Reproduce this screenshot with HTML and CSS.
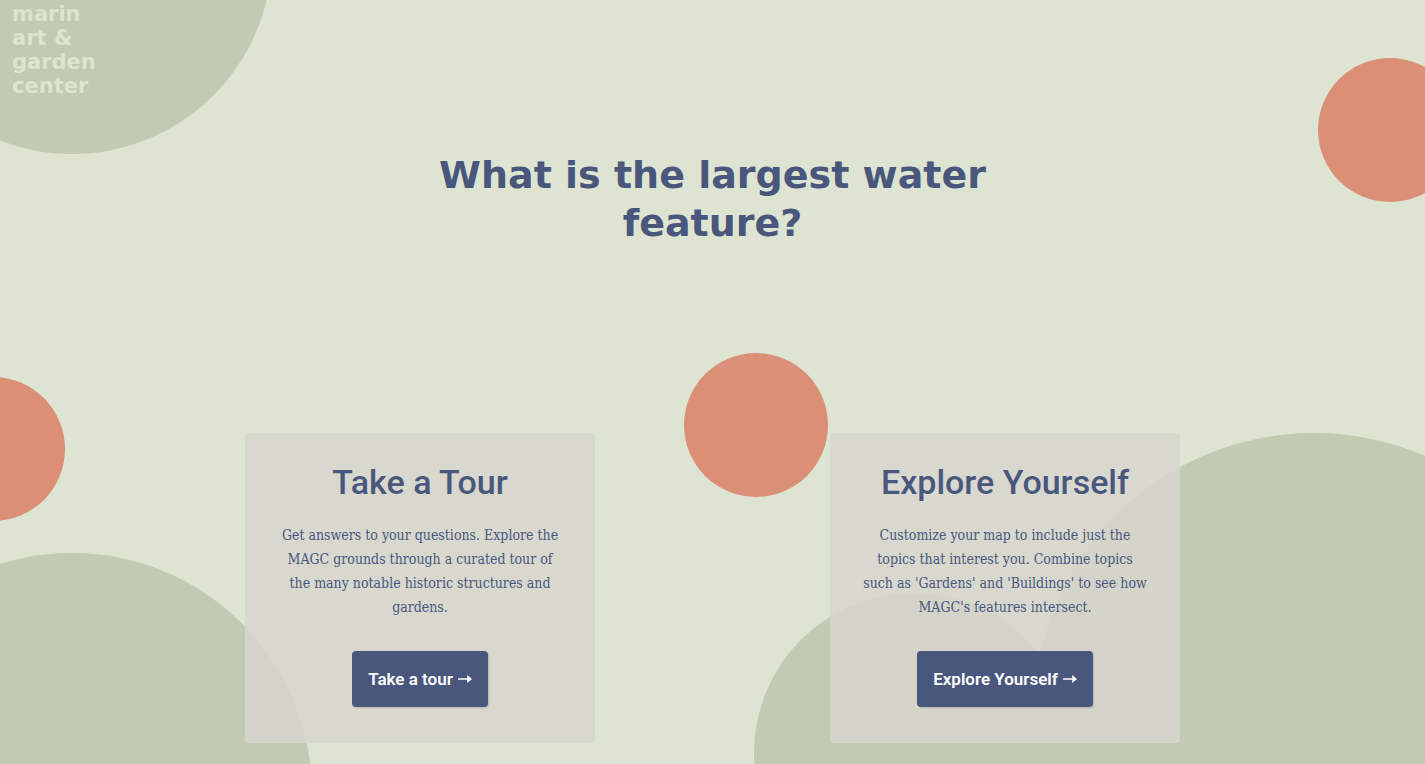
FILE: index.html
```html
<!DOCTYPE html>
<html lang="en">
<head>
<meta charset="utf-8">
<meta name="viewport" content="width=device-width, initial-scale=1">
<title>Marin Art &amp; Garden Center</title>
<link rel="stylesheet" href="styles.css">
</head>
<body>
<div class="page">
  <div class="shapes" aria-hidden="true">
    <span class="circle sage top-left"></span>
    <span class="circle sage bottom-left"></span>
    <span class="circle sage bottom-middle"></span>
    <span class="circle sage bottom-right"></span>
    <span class="circle coral left"></span>
    <span class="circle coral middle"></span>
    <span class="circle coral right"></span>
  </div>
  <header class="header">
    <a class="logo" href="#">marin<br>art &amp;<br>garden<br>center</a>
  </header>
  <main class="main">
    <h1 class="question">What is the largest water feature?</h1>
    <div class="cards">
      <section class="card">
        <h2 class="card-title">Take a Tour</h2>
        <p class="card-text">Get answers to your questions. Explore the MAGC grounds through a curated tour of the many notable historic structures and gardens.</p>
        <button class="button" type="button">Take a tour
          <svg class="arrow" viewBox="0 0 14 10" aria-hidden="true"><path d="M0 4.2H9.2V1L14 5L9.2 9V5.8H0Z"/></svg>
        </button>
      </section>
      <section class="card">
        <h2 class="card-title">Explore Yourself</h2>
        <p class="card-text">Customize your map to include just the topics that interest you. Combine topics such as 'Gardens' and 'Buildings' to see how MAGC's features intersect.</p>
        <button class="button" type="button">Explore Yourself
          <svg class="arrow" viewBox="0 0 14 10" aria-hidden="true"><path d="M0 4.2H9.2V1L14 5L9.2 9V5.8H0Z"/></svg>
        </button>
      </section>
    </div>
  </main>
</div>
</body>
</html>
```
FILE: styles.css
```css
* { box-sizing: border-box; }

body {
  margin: 0;
  background: #dde4d1;
  color: #4a577d;
  font-family: "DejaVu Serif Condensed", "DejaVu Serif", serif;
}

.page {
  position: relative;
  min-height: 100vh;
  overflow: hidden;
}

/* Decorative background circles */
.shapes { position: absolute; inset: 0; }
.circle { position: absolute; border-radius: 50%; }
.sage { background: #c1cab2; }
.coral { width: 144px; height: 144px; background: #db8f76; }
.top-left { width: 400px; height: 400px; left: -128px; top: -246px; }
.bottom-left { width: 480px; height: 480px; left: -168px; top: 553px; }
.bottom-middle { width: 320px; height: 320px; left: calc(50% + 41px); top: 593px; }
.bottom-right { width: 560px; height: 560px; right: -169px; top: 433px; }
.left { left: -79px; top: 377px; }
.middle { left: calc(50% - 29px); top: 353px; }
.right { right: -37px; top: 58px; }

.header {
  position: relative;
  display: flex;
  padding: 2px 12px 0;
}
.logo {
  color: #dde4d1;
  font: 700 21px/24px "DejaVu Sans", sans-serif;
  text-decoration: none;
}

.main {
  position: relative;
  display: flex;
  flex-direction: column;
  align-items: center;
  padding: 53px 16px 21px;
}
.question {
  max-width: 600px;
  margin: 0 0 186px;
  font: 700 38px/48px "DejaVu Sans", sans-serif;
  text-align: center;
}
.cards {
  display: grid;
  grid-template-columns: 1fr 1fr;
  justify-items: center;
  width: 100%;
  max-width: 1170px;
}
.card {
  display: flex;
  flex-direction: column;
  align-items: center;
  width: 350px;
  padding: 32px 32px 36px;
  border-radius: 4px;
  background: rgba(215, 214, 207, 0.85);
  text-align: center;
}
.card-title {
  margin: 0 0 24px;
  font: 500 34px/34px Roboto, sans-serif;
}
.card-text {
  margin: 0 0 32px;
  font-size: 14px;
  line-height: 24px;
}
.button {
  display: flex;
  align-items: center;
  gap: 5px;
  height: 56px;
  padding: 0 16px;
  border: 0;
  border-radius: 4px;
  background: #4a577d;
  box-shadow: 1px 1px 2px rgba(0, 0, 0, 0.15);
  color: #fff;
  font: 600 17px/24px Roboto, sans-serif;
}
.arrow { width: 14px; height: 10px; fill: currentColor; }
```
